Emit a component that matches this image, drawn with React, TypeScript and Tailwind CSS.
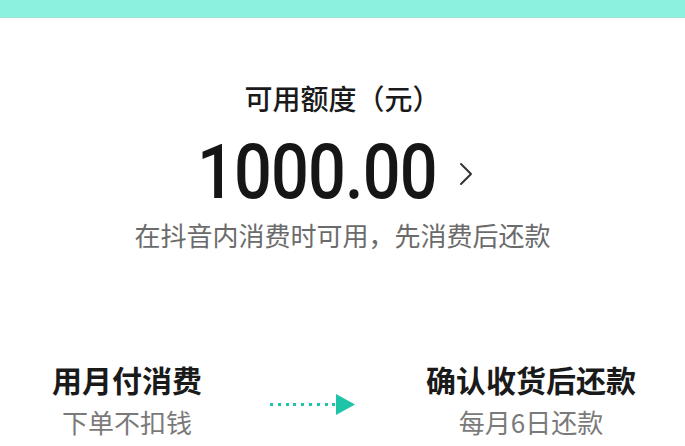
export default function App() {
  const cjk = { fontFamily: '"Noto Sans CJK SC", "Noto Sans", sans-serif' };

  return (
    <div className="w-[685px] h-[446px] overflow-hidden bg-white" style={cjk}>
      <div className="h-[18px] bg-[#8cf2df] border-b border-[#9fe6d8]" />

      <div className="flex flex-col items-center pt-[60px]">
        <h1 className="text-[28px] leading-[40px] font-medium text-[#1a1a1a]">可用额度（元）</h1>

        <div className="flex items-center mt-[14px] mr-[14px]">
          <div className="w-[235px] h-[80px] overflow-visible whitespace-nowrap">
            <span
              className="inline-block origin-left scale-x-[0.877] text-[76px] leading-[80px] font-medium text-[#161616] tracking-[-1px]"
              style={{ fontFamily: 'Roboto, "Liberation Sans", sans-serif' }}
            >
              1000.00
            </span>
          </div>
          <svg className="ml-[26px] mt-[4px]" width="16" height="24" viewBox="0 0 16 24" fill="none">
            <path d="M3 2 L13 12 L3 22" stroke="#333" strokeWidth="2" strokeLinecap="round" strokeLinejoin="round" />
          </svg>
        </div>

        <p className="mt-[6px] text-[26px] leading-[34px] text-[#6b6b6b]">在抖音内消费时可用，先消费后还款</p>
      </div>

      <div className="flex items-center mt-[108px]">
        <div className="w-[254px] flex flex-col items-center">
          <span className="text-[30px] leading-[38px] font-bold text-[#1a1a1a]">用月付消费</span>
          <span className="mt-[7px] text-[26px] leading-[34px] text-[#7a7a7a]">下单不扣钱</span>
        </div>

        <div className="w-[118px] flex items-center pl-[16px] mt-[9px]">
          <div className="flex gap-[4.8px]">
            {[0, 1, 2, 3, 4, 5, 6, 7, 8].map((i) => (
              <span key={i} className="w-[3px] h-[3px] bg-[#1dc4a8]" />
            ))}
          </div>
          <svg width="20" height="21" viewBox="0 0 20 21" className="ml-[1px]">
            <path d="M0 0 L19 10.5 L0 21 Z" fill="#1dc4a8" />
          </svg>
        </div>

        <div className="w-[300px] ml-[9px] flex flex-col items-center">
          <span className="text-[30px] leading-[38px] font-bold text-[#1a1a1a]">确认收货后还款</span>
          <span className="mt-[7px] text-[26px] leading-[34px] text-[#7a7a7a]">每月6日还款</span>
        </div>
      </div>
    </div>
  );
}
